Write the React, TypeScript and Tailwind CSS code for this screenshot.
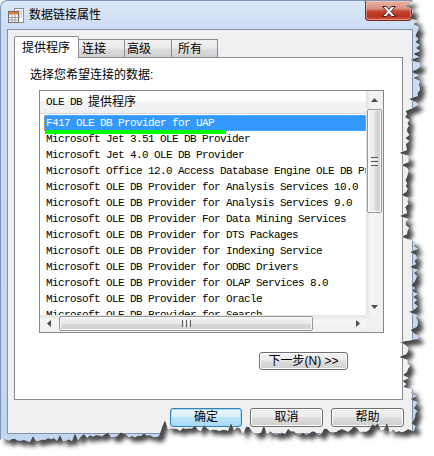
import React from 'react'

const providers = [
  'F417 OLE DB Provider for UAP',
  'Microsoft Jet 3.51 OLE DB Provider',
  'Microsoft Jet 4.0 OLE DB Provider',
  'Microsoft Office 12.0 Access Database Engine OLE DB Provider',
  'Microsoft OLE DB Provider for Analysis Services 10.0',
  'Microsoft OLE DB Provider for Analysis Services 9.0',
  'Microsoft OLE DB Provider For Data Mining Services',
  'Microsoft OLE DB Provider for DTS Packages',
  'Microsoft OLE DB Provider for Indexing Service',
  'Microsoft OLE DB Provider for ODBC Drivers',
  'Microsoft OLE DB Provider for OLAP Services 8.0',
  'Microsoft OLE DB Provider for Oracle',
  'Microsoft OLE DB Provider for Search',
]

function makeRng(seed: number) {
  let s = seed
  return () => {
    s = (s * 16807) % 2147483647
    return s / 2147483647
  }
}

// torn paper edge along the right and bottom of the screenshot
function tornOutline(): [number, number][] {
  const r = makeRng(11)
  const pts: [number, number][] = [[0, 0], [413, 0]]
  const rightBase = (y: number) =>
    y < 20 ? 413 : y < 110 ? 418 : y < 240 ? 407 : y < 340 ? 416 : y < 390 ? 408 : 415
  for (let y = 3; y < 428; y += 3) {
    let x = rightBase(y) + (r() - 0.5) * 5
    if (r() < 0.18) x -= 3 + r() * 5
    pts.push([x, y])
  }
  const bottomBase = (x: number) =>
    x > 330 ? 431 : x > 240 ? 433 : x > 160 ? 429 : x > 80 ? 436 : 440
  for (let x = 414; x >= 0; x -= 3) {
    let y = bottomBase(x) + (r() - 0.5) * 4
    if (r() < 0.18) y -= 3 + r() * 6
    pts.push([x, y])
  }
  pts.push([0, 441])
  return pts
}

const mono = "font-['Liberation_Mono','Noto_Sans_CJK_SC',monospace] text-[11px] tracking-[-0.6px]"
const cjk = "font-['Liberation_Sans','Noto_Sans_CJK_SC',sans-serif] text-[12px]"

function TitleIcon() {
  return (
    <svg width="16" height="16" viewBox="0 0 16 16">
      <rect x="6.5" y="0.5" width="9" height="14" fill="#fbfbfb" stroke="#8d8d8d" />
      <path d="M8 3h6M8 5h6M8 7h6M8 9h6" stroke="#b0b0b0" />
      <rect x="0.5" y="3.5" width="10" height="11" fill="#ffffff" stroke="#6f6f6f" />
      <rect x="1" y="4" width="9" height="2.5" fill="#e57f2f" />
      <path d="M1 9.5h9M1 12h9M4 6.5v8M7 6.5v8" stroke="#9a9a9a" />
    </svg>
  )
}

function CloseButton() {
  return (
    <div className="flex h-[20px] w-[47px] items-center justify-center self-start rounded-b-[4px] border border-t-0 border-[#7b2a1f] bg-[linear-gradient(#eab2a7,#d98f80_40%,#c4462f_55%,#b8321f_80%,#d35e43)] shadow-[inset_0_0_0_1px_rgba(255,210,200,0.45)]">
      <svg width="14" height="11" viewBox="0 0 14 11" className="mt-[1px]">
        <path
          d="M0.5 0.5h4l2.5 3 2.5-3h4l-4.5 5 4.5 5h-4l-2.5-3-2.5 3h-4l4.5-5z"
          fill="#ffffff"
          stroke="#452320"
          strokeWidth="1"
          strokeLinejoin="round"
        />
      </svg>
    </div>
  )
}

function Arrow({ dir }: { dir: 'up' | 'down' | 'left' | 'right' }) {
  const d = {
    up: 'M3.5 0L7 4H0z',
    down: 'M0 0h7L3.5 4z',
    left: 'M0 3.5L4 0v7z',
    right: 'M0 0l4 3.5L0 7z',
  }[dir]
  const vertical = dir === 'up' || dir === 'down'
  return (
    <svg width={vertical ? 7 : 4} height={vertical ? 4 : 7} viewBox={vertical ? '0 0 7 4' : '0 0 4 7'}>
      <path d={d} fill="#4d4d4d" />
    </svg>
  )
}

function VScrollbar() {
  return (
    <div className="flex h-[224px] w-[17px] flex-col bg-[linear-gradient(to_right,#e3e3e3,#f5f5f5_30%,#f0f0f0)]">
      <div className="flex h-[17px] items-center justify-center">
        <Arrow dir="up" />
      </div>
      <div className="flex flex-1 flex-col">
        <div className="mx-[1px] mt-[1px] flex h-[104px] flex-col items-center justify-center gap-[1px] rounded-[2px] border border-[#979797] bg-[linear-gradient(to_right,#f4f4f4,#e8e8e8_50%,#d9d9d9_51%,#cfcfcf)] shadow-[inset_0_0_0_1px_#fafafa]">
          <div className="h-px w-[7px] bg-[#5b5b5b]" />
          <div className="h-px w-[7px] bg-[#f8f8f8]" />
          <div className="h-px w-[7px] bg-[#5b5b5b]" />
          <div className="h-px w-[7px] bg-[#f8f8f8]" />
          <div className="h-px w-[7px] bg-[#5b5b5b]" />
        </div>
      </div>
      <div className="flex h-[17px] items-center justify-center">
        <Arrow dir="down" />
      </div>
    </div>
  )
}

function HScrollbar() {
  return (
    <div className="flex h-[17px] w-[326px] bg-[linear-gradient(#e3e3e3,#f5f5f5_30%,#f0f0f0)]">
      <div className="flex w-[17px] items-center justify-center">
        <Arrow dir="left" />
      </div>
      <div className="flex flex-1 items-center">
        <div className="ml-[2px] flex h-[15px] w-[254px] items-center justify-center gap-[1px] rounded-[2px] border border-[#979797] bg-[linear-gradient(#f4f4f4,#e8e8e8_50%,#d9d9d9_51%,#cfcfcf)] shadow-[inset_0_0_0_1px_#fafafa]">
          <div className="h-[7px] w-px bg-[#5b5b5b]" />
          <div className="h-[7px] w-px bg-[#f8f8f8]" />
          <div className="h-[7px] w-px bg-[#5b5b5b]" />
          <div className="h-[7px] w-px bg-[#f8f8f8]" />
          <div className="h-[7px] w-px bg-[#5b5b5b]" />
        </div>
      </div>
      <div className="flex w-[17px] items-center justify-center">
        <Arrow dir="right" />
      </div>
    </div>
  )
}

function ProviderList() {
  return (
    <div className="ml-[24px] mt-[8px] w-[345px] border border-[#828790] bg-white">
      <div className="flex">
        <div className="flex h-[224px] w-[326px] flex-col overflow-hidden">
          <div className="flex h-[23px] shrink-0 items-center border-b border-[#d8d8d8] bg-[linear-gradient(#ffffff,#ffffff_45%,#f1f2f4_50%,#eef0f2)] pl-[6px]">
            <span className={`${mono} whitespace-pre text-black`}>OLE DB </span>
            <span className={`${cjk} leading-[14px] text-black`}>提供程序</span>
          </div>
          <div className="shrink-0 pt-[1px]">
            {providers.map((p, i) => (
              <div
                key={p}
                className={`relative ml-[4px] h-[16px] w-[322px] whitespace-nowrap border pl-[1px] leading-[15px] ${mono} ${
                  i === 0 ? 'border-dotted border-[#e69a4c] bg-[#3399ff] text-white' : 'border-transparent text-black'
                }`}
              >
                {p}
                {i === 0 && <div className="absolute left-0 top-[14px] h-[4px] w-[181px] bg-[#00ff00]" />}
              </div>
            ))}
          </div>
        </div>
        <VScrollbar />
      </div>
      <div className="flex">
        <HScrollbar />
        <div className="h-[17px] w-[17px] bg-[#f0f0f0]" />
      </div>
    </div>
  )
}

function DialogButton({ label, primary }: { label: string; primary?: boolean }) {
  return (
    <div
      className={`flex h-[19px] items-center justify-center rounded-[3px] border ${cjk} leading-[17px] text-black ${
        primary
          ? 'w-[72px] border-[#3c7fb1] bg-[linear-gradient(#eaf6fd,#d9f0fc_45%,#bee6fd_50%,#a7d9f5)] shadow-[inset_0_0_0_1px_#9ddcfb]'
          : 'w-[73px] border-[#707070] bg-[linear-gradient(#f2f2f2,#ebebeb_45%,#dddddd_50%,#cfcfcf)] shadow-[inset_0_0_0_1px_#fcfcfc]'
      }`}
    >
      {label}
    </div>
  )
}

export default function App() {
  const outline = tornOutline()
  const clip = `polygon(${outline.map(([x, y]) => `${x}px ${y}px`).join(',')})`
  const shadowPts = outline.map(([x, y]) => `${x + 5},${y + 5}`).join(' ')

  return (
    <div className="relative h-[456px] w-[434px] overflow-hidden bg-white">
      <svg className="pointer-events-none absolute left-0 top-0" width="434" height="456">
        <defs>
          <filter id="tearBlur" x="-5%" y="-5%" width="110%" height="110%">
            <feGaussianBlur stdDeviation="2" />
          </filter>
        </defs>
        <polygon points={shadowPts} fill="#4a4a4a" filter="url(#tearBlur)" />
      </svg>

      <div
        className="relative z-10 flex h-[442px] w-[420px] flex-col rounded-tl-[7px] border-l border-t border-[#7d96b8] bg-[linear-gradient(#dce8f7,#cbdcf2_28px,#c2d6ef)]"
        style={{ clipPath: clip }}
      >
        {/* title bar */}
        <div className="flex h-[28px] shrink-0 items-center">
          <div className="ml-[7px] mt-[2px]">
            <TitleIcon />
          </div>
          <span className={`ml-[5px] ${cjk} leading-[14px] text-black`}>数据链接属性</span>
          <div className="ml-auto mr-[8px] self-start">
            <CloseButton />
          </div>
        </div>

        {/* client area */}
        <div className="ml-[6px] mr-[7px] flex h-[405px] shrink-0 flex-col border border-[#7f91ab] bg-[#f0f0f0] pl-[6px] pt-[6px]">
          <div className="flex h-[21px] items-end">
            <div className={`relative z-10 -mb-px flex h-[22px] w-[65px] items-center rounded-t-[2px] border border-b-0 border-[#898c95] bg-white pl-[7px] ${cjk} leading-[14px] text-black`}>
              提供程序
            </div>
            <div className={`-ml-px flex h-[18px] w-[47px] items-center border border-b-0 border-[#898c95] bg-[linear-gradient(#f2f2f2,#ebebeb_45%,#dddddd_55%,#cfcfcf)] pl-[3px] pt-[1px] ${cjk} leading-[14px] text-black`}>
              连接
            </div>
            <div className={`-ml-px flex h-[18px] w-[48px] items-center border border-b-0 border-[#898c95] bg-[linear-gradient(#f2f2f2,#ebebeb_45%,#dddddd_55%,#cfcfcf)] pl-[2px] pt-[1px] ${cjk} leading-[14px] text-black`}>
              高级
            </div>
            <div className={`-ml-px flex h-[18px] w-[47px] items-center border border-b-0 border-[#898c95] bg-[linear-gradient(#f2f2f2,#ebebeb_45%,#dddddd_55%,#cfcfcf)] pl-[6px] pt-[1px] ${cjk} leading-[14px] text-black`}>
              所有
            </div>
          </div>

          <div className="h-[343px] w-[389px] border border-[#898c95] bg-white">
            <div className={`pl-[15px] pt-[10px] ${cjk} leading-[14px] text-black`}>选择您希望连接的数据:</div>
            <ProviderList />
            <div className="mt-[19px] flex justify-end pr-[54px]">
              <div className={`flex h-[18px] w-[89px] items-center justify-center rounded-[3px] border border-[#707070] bg-[linear-gradient(#f2f2f2,#ebebeb_45%,#dddddd_50%,#cfcfcf)] shadow-[inset_0_0_0_1px_#fcfcfc] ${cjk} leading-[16px] text-black`}>
                下一步(N) &gt;&gt;
              </div>
            </div>
          </div>

          <div className="mt-[8px] flex justify-end gap-[8px] pr-[8px]">
            <DialogButton label="确定" primary />
            <DialogButton label="取消" />
            <DialogButton label="帮助" />
          </div>
        </div>
      </div>
    </div>
  )
}
